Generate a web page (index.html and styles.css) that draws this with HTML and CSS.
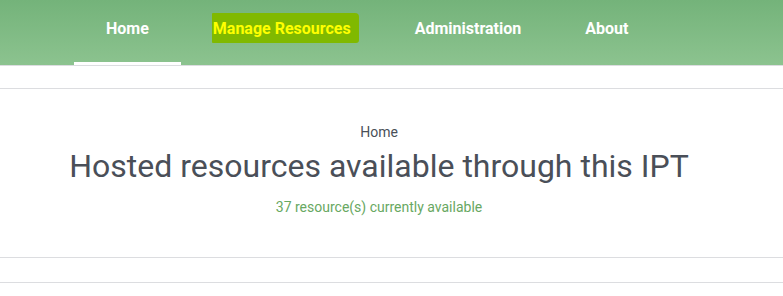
FILE: index.html
```html
<!DOCTYPE html>
<html lang="en">
<head>
    <meta charset="UTF-8">
    <meta name="viewport" content="width=device-width, initial-scale=1.0">
    <title>IPT - Home</title>
    <link rel="stylesheet" href="styles.css">
</head>
<body>
    <header class="navbar">
        <nav class="nav-links">
            <a href="#" class="nav-link active">Home</a>
            <a href="#" class="nav-link"><span class="marker">Manage Resources</span></a>
            <a href="#" class="nav-link">Administration</a>
            <a href="#" class="nav-link">About</a>
        </nav>
    </header>

    <div class="spacer-band"></div>

    <section class="page-header">
        <div class="breadcrumb">Home</div>
        <h1 class="page-title">Hosted resources available through this IPT</h1>
        <p class="page-subtitle">37 resource(s) currently available</p>
    </section>

    <div class="spacer-band spacer-band-lower"></div>
</body>
</html>
```

FILE: styles.css
```css
* {
    margin: 0;
    padding: 0;
    box-sizing: border-box;
}

body {
    font-family: Roboto, "Liberation Sans", sans-serif;
    background: #fff;
    color: #4a5058;
}

.navbar {
    height: 66px;
    background: linear-gradient(180deg, #74b37a 0%, #8cc38f 100%);
    border-bottom: 1px solid #dcdde0;
}

.nav-links {
    display: flex;
    height: 65px;
    padding-left: 74px;
}

.nav-link {
    display: flex;
    align-items: center;
    padding: 0 32px 6px;
    color: #fff;
    font-size: 16px;
    font-weight: 700;
    text-decoration: none;
    border-bottom: 3px solid transparent;
}

.nav-link.active {
    border-bottom-color: #fff;
}

/* highlighter-pen look on the menu item */
.marker {
    color: #ffff00;
    background: #80b900;
    padding: 6px 8px 5px 1px;
    margin: 0 -8px 0 -1px;
    border-radius: 1px 4px 3px 1px;
}

.spacer-band {
    height: 23px;
    border-bottom: 1px solid #dcdde0;
}

.spacer-band-lower {
    height: 25px;
}

.page-header {
    height: 169px;
    border-bottom: 1px solid #dcdde0;
    text-align: center;
    padding: 33px 25px 0 0;
}

.breadcrumb {
    font-size: 14px;
    line-height: 20px;
    color: #4a5058;
}

.page-title {
    font-size: 32px;
    font-weight: 400;
    line-height: 40px;
    margin-top: 4px;
    color: #4a4f58;
}

.page-subtitle {
    font-size: 14px;
    line-height: 20px;
    margin-top: 11px;
    color: #68a862;
}
```
